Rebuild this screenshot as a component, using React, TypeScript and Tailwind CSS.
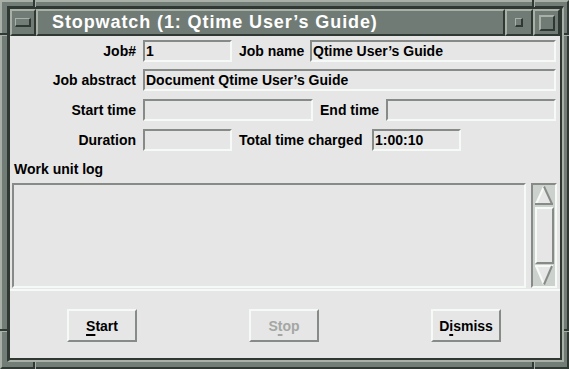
import React from "react";

const FONT = { fontFamily: '"Liberation Sans", Arial, sans-serif' };

function Field({ w, children }: { w: string; children?: React.ReactNode }) {
  return (
    <div
      className={`${w} h-[22px] border-2 border-t-[#878b87] border-l-[#878b87] border-b-[#f6faf6] border-r-[#f6faf6] flex items-center pl-[1px] text-[14px] leading-[16px] font-bold text-black whitespace-nowrap overflow-hidden`}
    >
      {children}
    </div>
  );
}

function Label({ children }: { children: React.ReactNode }) {
  return (
    <div className="w-[126px] text-right text-[14px] leading-[16px] font-bold text-black whitespace-nowrap">
      {children}
    </div>
  );
}

function Btn({ pre, mn, post, disabled }: { pre: string; mn: string; post: string; disabled?: boolean }) {
  return (
    <div className="w-[70px] h-[33px] border-2 border-t-[#f6faf6] border-l-[#f6faf6] border-b-[#878b87] border-r-[#878b87] flex items-center justify-center">
      <span
        className={`text-[14px] leading-[16px] font-bold whitespace-nowrap ${disabled ? "text-[#a3a7a3]" : "text-black"}`}
      >
        {pre}
        <span className="underline decoration-2 underline-offset-[3px]">{mn}</span>
        {post}
      </span>
    </div>
  );
}

function Bevel({ className, children }: { className: string; children?: React.ReactNode }) {
  return (
    <div
      className={`${className} h-full border-2 border-t-[#a8b0a8] border-l-[#a8b0a8] border-b-[#2f3833] border-r-[#2f3833] bg-[#717b75]`}
    >
      {children}
    </div>
  );
}

export default function App() {
  return (
    <div style={FONT} className="relative w-[569px] h-[369px] overflow-hidden">
      <div className="w-[569px] h-[369px] bg-[#737d77] border-2 border-t-[#a8b0a8] border-l-[#a8b0a8] border-b-[#2f3833] border-r-[#2f3833] pt-[4px] pl-[5px] pr-[3px] pb-[5px] flex">
        <div className="flex-1 border-t-[3px] border-l-[3px] border-b-2 border-r-2 border-t-[#2f3833] border-l-[#2f3833] border-b-[#a8b0a8] border-r-[#a8b0a8] flex">
          <div className="flex-1 border-b-2 border-r-2 border-[#2f3833] flex flex-col">
            {/* Title bar */}
            <div className="h-[27px] flex">
              <Bevel className="w-[26px] flex items-start justify-center pt-[7px]">
                <div className="w-[16px] h-[9px] border border-t-[#a8b0a8] border-l-[#a8b0a8] border-b-2 border-r-2 border-b-[#2f3833] border-r-[#2f3833] bg-[#737d77]" />
              </Bevel>
              <Bevel className="w-[469px] pl-[14px] pt-[1px]">
                <div className="text-white font-bold text-[18px] leading-[18px] tracking-[0.9px] whitespace-nowrap mt-[1px]">
                  Stopwatch (1: Qtime User’s Guide)
                </div>
              </Bevel>
              <Bevel className="w-[28px] flex items-start justify-center pt-[7px]">
                <div className="w-[8px] h-[9px] border border-t-[#a8b0a8] border-l-[#a8b0a8] border-b-2 border-r-2 border-b-[#2f3833] border-r-[#2f3833] bg-[#737d77]" />
              </Bevel>
              <Bevel className="w-[27px] flex items-start justify-center pt-[4px]">
                <div className="w-[16px] h-[16px] border-2 border-t-[#a8b0a8] border-l-[#a8b0a8] border-b-[#2f3833] border-r-[#2f3833]" />
              </Bevel>
            </div>

            {/* Client */}
            <div className="flex-1 bg-[#e6e6e6] flex flex-col pt-[4px]">
              <div className="flex items-center h-[22px]">
                <Label>Job#</Label>
                <div className="ml-[7px]">
                  <Field w="w-[89px]">1</Field>
                </div>
                <div className="w-[78px] pl-[7px] text-[14px] leading-[16px] font-bold whitespace-nowrap">Job name</div>
                <Field w="w-[246px]">Qtime User’s Guide</Field>
              </div>

              <div className="flex items-center h-[22px] mt-[7px]">
                <Label>Job abstract</Label>
                <div className="ml-[7px]">
                  <Field w="w-[413px]">Document Qtime User’s Guide</Field>
                </div>
              </div>

              <div className="flex items-center h-[22px] mt-[8px]">
                <Label>Start time</Label>
                <div className="ml-[7px]">
                  <Field w="w-[170px]" />
                </div>
                <div className="w-[73px] pl-[7px] text-[14px] leading-[16px] font-bold whitespace-nowrap">End time</div>
                <Field w="w-[170px]" />
              </div>

              <div className="flex items-center h-[22px] mt-[8px]">
                <Label>Duration</Label>
                <div className="ml-[7px]">
                  <Field w="w-[89px]" />
                </div>
                <div className="w-[140px] pl-[7px] text-[14px] leading-[16px] font-bold whitespace-nowrap">
                  Total time charged
                </div>
                <Field w="w-[89px]">1:00:10</Field>
              </div>

              <div className="mt-[10px] h-[16px] pl-[4px] text-[14px] leading-[16px] font-bold whitespace-nowrap">
                Work unit log
              </div>

              <div className="mt-[6px] h-[105px] flex pl-[2px]">
                <div className="w-[514px] h-[105px] border-2 border-t-[#878b87] border-l-[#878b87] border-b-[#f6faf6] border-r-[#f6faf6]" />
                <div className="ml-[5px] w-[26px] h-[105px] border-2 border-t-[#878b87] border-l-[#878b87] border-b-[#f6faf6] border-r-[#f6faf6] bg-[#cdd1cd] flex flex-col items-center pt-[1px]">
                  <svg width="18" height="19" viewBox="0 0 18 19">
                    <polygon points="9,1 1,18 17,18" fill="#e6e6e6" />
                    <line x1="9" y1="0.5" x2="1" y2="18" stroke="#f6faf6" strokeWidth="2" />
                    <line x1="9" y1="0.5" x2="17" y2="18" stroke="#878b87" strokeWidth="2" />
                    <line x1="0" y1="18" x2="18" y2="18" stroke="#878b87" strokeWidth="2" />
                  </svg>
                  <div className="mt-[2px] w-[19px] h-[57px] border-2 border-t-[#f6faf6] border-l-[#f6faf6] border-b-[#878b87] border-r-[#878b87] bg-[#e6e6e6]" />
                  <svg className="mt-[1px]" width="18" height="20" viewBox="0 0 18 20">
                    <polygon points="1,1 17,1 9,19" fill="#e6e6e6" />
                    <line x1="0" y1="1" x2="18" y2="1" stroke="#f6faf6" strokeWidth="2" />
                    <line x1="1" y1="1" x2="9" y2="19.5" stroke="#f6faf6" strokeWidth="2" />
                    <line x1="17" y1="1" x2="9" y2="19.5" stroke="#878b87" strokeWidth="2" />
                  </svg>
                </div>
              </div>

              <div className="mt-[1px] h-[2px] bg-[#f6faf6]" />

              <div className="mt-[18px] flex justify-between pl-[57px] pr-[59px]">
                <Btn pre="" mn="S" post="tart" />
                <Btn pre="S" mn="t" post="op" disabled />
                <Btn pre="D" mn="i" post="smiss" />
              </div>
            </div>
          </div>
        </div>
      </div>

      {/* frame resize notches */}
      <div className="absolute left-[33px] top-0 w-[2px] h-[7px] bg-[#2f3833]" />
      <div className="absolute left-[35px] top-0 w-[1px] h-[7px] bg-[#a8b0a8]" />
      <div className="absolute left-0 top-[33px] w-[7px] h-[2px] bg-[#2f3833]" />
      <div className="absolute left-0 top-[35px] w-[7px] h-[1px] bg-[#a8b0a8]" />
      <div className="absolute left-[532px] top-0 w-[2px] h-[7px] bg-[#2f3833]" />
      <div className="absolute left-[534px] top-0 w-[1px] h-[7px] bg-[#a8b0a8]" />
      <div className="absolute right-0 top-[33px] w-[5px] h-[2px] bg-[#2f3833]" />
      <div className="absolute right-0 top-[35px] w-[5px] h-[1px] bg-[#a8b0a8]" />
      <div className="absolute left-0 top-[329px] w-[7px] h-[2px] bg-[#2f3833]" />
      <div className="absolute left-0 top-[331px] w-[7px] h-[1px] bg-[#a8b0a8]" />
      <div className="absolute right-0 top-[329px] w-[5px] h-[2px] bg-[#2f3833]" />
      <div className="absolute right-0 top-[331px] w-[5px] h-[1px] bg-[#a8b0a8]" />
      <div className="absolute left-[33px] bottom-0 w-[2px] h-[7px] bg-[#2f3833]" />
      <div className="absolute left-[35px] bottom-0 w-[1px] h-[7px] bg-[#a8b0a8]" />
      <div className="absolute left-[532px] bottom-0 w-[2px] h-[7px] bg-[#2f3833]" />
      <div className="absolute left-[534px] bottom-0 w-[1px] h-[7px] bg-[#a8b0a8]" />
    </div>
  );
}
